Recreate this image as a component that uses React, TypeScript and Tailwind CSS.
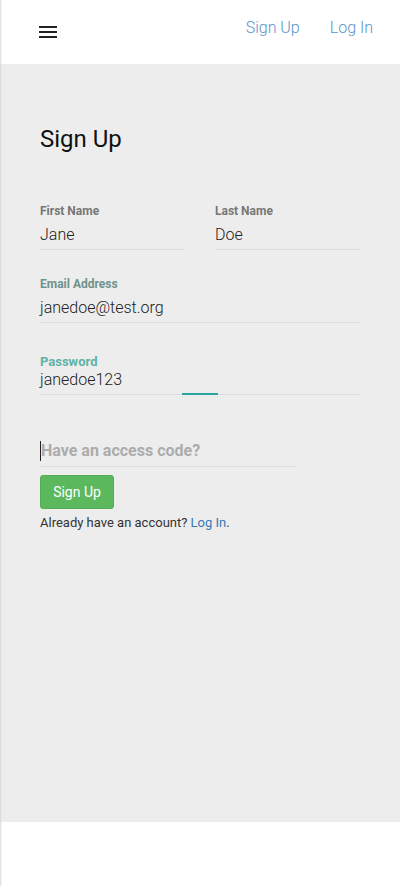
import React from 'react';

const font = { fontFamily: 'Roboto, "Noto Sans", sans-serif' };

function Field({ label, value, labelClass, width }: { label: string; value: string; labelClass: string; width: string }) {
  return (
    <div className={`${width} flex flex-col`}>
      <div className={`text-[12px] font-bold leading-[14px] ${labelClass}`}>{label}</div>
      <div className="mt-[7px] pb-[4px] border-b border-[#dcdcdc]">
        <div className="text-[16px] font-light leading-[20px] text-[#222]">{value}</div>
      </div>
    </div>
  );
}

export default function App() {
  return (
    <div className="w-[400px] h-[886px] flex flex-col bg-white relative" style={font}>
      <div className="absolute left-0 top-0 bottom-0 w-[2px] bg-gradient-to-r from-[#d8d8d8] to-transparent" />
      {/* header */}
      <header className="h-[64px] flex items-start justify-between pl-[39px] pr-[27px] bg-white">
        <svg width="18" height="13" viewBox="0 0 18 13" className="mt-[26px]">
          <rect x="0" y="0" width="18" height="2" fill="#222" />
          <rect x="0" y="5" width="18" height="2" fill="#222" />
          <rect x="0" y="10" width="18" height="2" fill="#222" />
        </svg>
        <nav className="flex gap-[30px] mt-[16px] text-[16px] font-light text-[#5a93cc]">
          <span>Sign Up</span>
          <span>Log In</span>
        </nav>
      </header>

      {/* main */}
      <main className="h-[758px] bg-[#ededed] px-[40px] pt-[60px]">
        <h1 className="text-[24px] leading-[30px] text-[#111]">Sign Up</h1>

        <div className="mt-[50px] flex gap-[31px]">
          <Field label="First Name" value="Jane" labelClass="text-[#777]" width="w-[144px]" />
          <Field label="Last Name" value="Doe" labelClass="text-[#777]" width="w-[145px]" />
        </div>

        <div className="mt-[27px]">
          <Field label="Email Address" value="janedoe@test.org" labelClass="text-[#6f928b]" width="w-[320px]" />
        </div>

        <div className="mt-[31px]">
          <div className="w-[320px] flex flex-col">
            <div className="text-[13px] font-bold leading-[15px] text-[#5fb2a7]">Password</div>
            <div className="relative mt-[1px] pb-[4px] border-b border-[#dcdcdc]">
              <div className="text-[16px] font-light leading-[20px] text-[#222]">janedoe123</div>
              <div className="absolute left-[142px] bottom-[-1px] w-[36px] h-[2px] bg-[#26a69a]" />
            </div>
          </div>
        </div>

        <div className="mt-[46px] w-[256px] border-b border-[#dcdcdc] pb-[5px] flex items-center">
          <div className="w-[1px] h-[20px] bg-[#222]" />
          <span className="text-[16px] font-bold leading-[20px] text-[#acacac]">Have an access code?</span>
        </div>

        <button className="mt-[8px] w-[74px] h-[34px] rounded-[3px] bg-[#5cb85c] border border-[#52ad52] text-white text-[14px] leading-[20px]">Sign Up</button>

        <p className="mt-[5px] text-[13px] leading-[18px] text-[#333]">
          Already have an account? <span className="text-[#337ab7]">Log In</span>.
        </p>
      </main>

      <footer className="flex-1 bg-white" />
    </div>
  );
}
